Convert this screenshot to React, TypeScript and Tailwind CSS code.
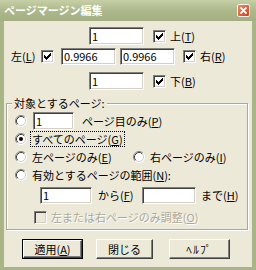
import React from 'react';

const Edit: React.FC<{ className: string; value?: string }> = ({ className, value }) => (
  <div
    className={`${className} bg-white border border-t-[#808080] border-l-[#808080] border-r-white border-b-white shadow-[inset_1px_1px_0_#404040,inset_-1px_-1px_0_#d4d0c8] flex items-center pl-[2px]`}
  >
    {value}
  </div>
);

const Check: React.FC<{ checked?: boolean; disabled?: boolean }> = ({ checked, disabled }) => (
  <div
    className={`w-[13px] h-[13px] shrink-0 border border-t-[#808080] border-l-[#808080] border-r-white border-b-white shadow-[inset_1px_1px_0_#404040,inset_-1px_-1px_0_#d4d0c8] flex items-center justify-center ${
      disabled ? 'bg-[#ece9d8]' : 'bg-white'
    }`}
  >
    {checked && (
      <svg width="7" height="7" viewBox="0 0 7 7" shapeRendering="crispEdges">
        <path
          d="M6 0h1v1h-1z M5 1h2v1h-2z M0 2h1v1h-1z M4 2h3v1h-3z M0 3h2v1h-2z M3 3h3v1h-3z M0 4h5v1h-5z M1 5h3v1h-3z M2 6h1v1h-1z"
          fill="#000"
        />
      </svg>
    )}
  </div>
);

const Radio: React.FC<{ checked?: boolean }> = ({ checked }) => (
  <svg width="12" height="12" viewBox="0 0 12 12" className="shrink-0">
    <circle cx="6" cy="6" r="5" fill="#fff" />
    <path d="M2.11 9.89A5.5 5.5 0 0 1 9.89 2.11" fill="none" stroke="#808080" />
    <path d="M9.89 2.11A5.5 5.5 0 0 1 2.11 9.89" fill="none" stroke="#fff" />
    <path d="M2.82 9.18A4.5 4.5 0 0 1 9.18 2.82" fill="none" stroke="#404040" />
    <path d="M9.18 2.82A4.5 4.5 0 0 1 2.82 9.18" fill="none" stroke="#d4d0c8" />
    {checked && <circle cx="6" cy="6" r="2" fill="#000" />}
  </svg>
);

const Btn: React.FC<{ className: string; isDefault?: boolean; children: React.ReactNode }> = ({
  className,
  isDefault,
  children,
}) => (
  <div className={`${className} h-[20px] ${isDefault ? 'border border-black' : ''}`}>
    <div className="w-full h-full flex items-center justify-center bg-[#ece9d8] border border-t-white border-l-white border-r-[#404040] border-b-[#404040] shadow-[inset_-1px_-1px_0_#808080]">
      {children}
    </div>
  </div>
);

export default function App() {
  return (
    <div className="w-[256px] h-[270px] flex flex-col bg-[#a9b587] font-['Noto_Sans_CJK_JP',sans-serif] text-[11px] leading-none text-black overflow-hidden">
      {/* title bar */}
      <div className="h-[21px] shrink-0 flex items-center justify-between pl-[4px] pr-[6px] bg-linear-to-b from-[#c6cfa6] via-[#adb88b] to-[#a3af82]">
        <span className="text-white font-bold text-[11px]">ページマージン編集</span>
        <div className="w-[13px] h-[13px] rounded-[2px] border border-[#f4f4f4] bg-linear-to-br from-[#f08a60] to-[#c8401f] flex items-center justify-center">
          <svg width="7" height="7" viewBox="0 0 7 7">
            <path d="M0.5 0.5L6.5 6.5M6.5 0.5L0.5 6.5" stroke="#fff" strokeWidth="1.8" />
          </svg>
        </div>
      </div>

      <div className="flex-1 mx-[4px] mb-[3px] bg-[#ece9d8] flex flex-col">
        {/* margins */}
        <div className="mt-[6px] h-[18px] flex items-center pl-[85px]">
          <Edit className="w-[55px] h-[18px]" value="1" />
          <div className="ml-[9px]"><Check checked /></div>
          <span className="ml-[4px]">上(<u>T</u>)</span>
        </div>
        <div className="mt-[3px] h-[17px] flex items-center pl-[7px]">
          <span className="w-[30px]">左(<u>L</u>)</span>
          <Check checked />
          <Edit className="ml-[7px] w-[55px] h-[17px]" value="0.9966" />
          <Edit className="ml-[4px] w-[55px] h-[17px]" value="0.9966" />
          <div className="ml-[8px]"><Check checked /></div>
          <span className="ml-[4px]">右(<u>R</u>)</span>
        </div>
        <div className="mt-[7px] h-[18px] flex items-center pl-[85px]">
          <Edit className="w-[55px] h-[18px]" value="1" />
          <div className="ml-[9px]"><Check checked /></div>
          <span className="ml-[4px]">下(<u>B</u>)</span>
        </div>

        {/* target pages group */}
        <div className="relative mt-[13px] ml-[2px] w-[242px] border border-[#aca899] shadow-[1px_1px_0_#fff,inset_1px_1px_0_#fff] pb-[4px] flex flex-col">
          <span className="absolute -top-[6px] left-[5px] px-[2px] bg-[#ece9d8]">対象とするページ:</span>
          <div className="mt-[8px] h-[18px] flex items-center pl-[8px]">
            <Radio />
            <Edit className="ml-[6px] w-[41px] h-[18px]" value="1" />
            <span className="ml-[8px]">ページ目のみ(<u>P</u>)</span>
          </div>
          <div className="mt-[1px] h-[16px] flex items-center pl-[8px]">
            <Radio checked />
            <span className="ml-[3px] h-[16px] flex items-center border border-dotted border-black px-[1px]">
              すべてのページ(<u>G</u>)
            </span>
          </div>
          <div className="mt-[2px] h-[16px] flex items-center pl-[8px]">
            <div className="w-[118px] flex items-center">
              <Radio />
              <span className="ml-[5px]">左ページのみ(<u>E</u>)</span>
            </div>
            <Radio />
            <span className="ml-[5px]">右ページのみ(<u>I</u>)</span>
          </div>
          <div className="mt-[2px] h-[16px] flex items-center pl-[8px]">
            <Radio />
            <span className="ml-[5px]">有効とするページの範囲(<u>N</u>):</span>
          </div>
          <div className="mt-[4px] h-[17px] flex items-center pl-[33px]">
            <Edit className="w-[52px] h-[17px]" value="1" />
            <span className="ml-[6px] w-[44px]">から(<u>F</u>)</span>
            <Edit className="w-[54px] h-[17px]" />
            <span className="ml-[5px]">まで(<u>H</u>)</span>
          </div>
          <div className="mt-[5px] h-[16px] flex items-center pl-[27px]">
            <Check disabled />
            <span className="ml-[4px] text-[#aca899] [text-shadow:1px_1px_0_#fff]">
              左または右ページのみ調整(<u>O</u>)
            </span>
          </div>
        </div>

        {/* buttons */}
        <div className="mt-[9px] flex items-center pl-[18px]">
          <Btn className="w-[61px]" isDefault>適用(<u>A</u>)</Btn>
          <Btn className="ml-[13px] w-[57px]">閉じる</Btn>
          <Btn className="ml-[16px] w-[61px]"><span className="tracking-[1.5px]">ﾍﾙﾌﾟ</span></Btn>
        </div>
      </div>
    </div>
  );
}
